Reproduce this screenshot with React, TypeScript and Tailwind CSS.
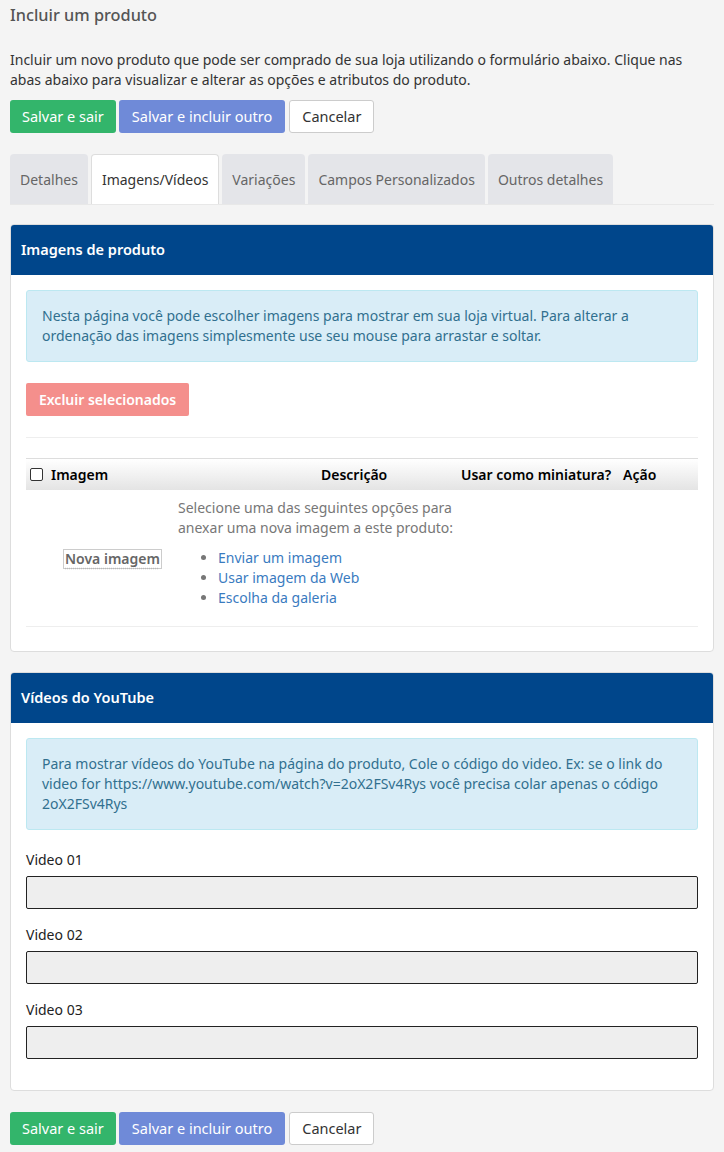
export default function App() {
  const tabs = ["Detalhes", "Imagens/Vídeos", "Variações", "Campos Personalizados", "Outros detalhes"];

  const actions = (
    <div className="flex gap-[3px]">
      <button className="h-[33px] px-[12px] rounded-[3px] bg-[#33b56b] text-white text-[14.5px]">Salvar e sair</button>
      <button className="h-[33px] px-[13px] rounded-[3px] bg-[#6f8ad8] text-white text-[14.5px]">Salvar e incluir outro</button>
      <button className="h-[33px] px-[12px] ml-[1px] rounded-[3px] bg-white border border-[#ccc] text-[#333] text-[14.5px]">Cancelar</button>
    </div>
  );

  return (
    <main className="min-h-screen bg-[#f4f4f4] px-[10px] pt-[3px] pb-[8px] text-[14px] text-[#333] font-['Noto_Sans',sans-serif]">
      {/* TITLE */}
      <h1 className="text-[16.3px] font-medium text-[#555] leading-[24px]">Incluir um produto</h1>
      <p className="mt-[23px] leading-[20px]">
        Incluir um novo produto que pode ser comprado de sua loja utilizando o formulário abaixo. Clique nas abas abaixo para visualizar e alterar as opções e atributos do produto.
      </p>
      <div className="mt-[10px]">{actions}</div>

      {/* TABS */}
      <div className="mt-[21px] flex gap-[3px] border-b border-[#e8e8e8]">
        {tabs.map((t) => (
          <div
            key={t}
            className={`h-[50px] px-[10px] flex items-center rounded-t-[4px] ${
              t === "Imagens/Vídeos" ? "bg-white text-[#333] border border-b-0 border-[#ddd]" : "bg-[#e4e5e9] text-[#666]"
            }`}
          >
            {t}
          </div>
        ))}
      </div>

      {/* IMAGENS */}
      <section className="mt-[19px] bg-white border border-[#ddd] rounded-[4px] overflow-hidden">
        <div className="h-[50px] bg-[#00468b] text-white font-semibold text-[14.5px] flex items-center px-[10px]">
          Imagens de produto
        </div>
        <div className="p-[15px]">
          <div className="bg-[#d9edf7] border border-[#bce8f1] text-[#31708f] rounded-[3px] px-[15px] py-[15px] leading-[20px]">
            Nesta página você pode escolher imagens para mostrar em sua loja virtual. Para alterar a ordenação das imagens simplesmente use seu mouse para arrastar e soltar.
          </div>
          <button className="mt-[21px] h-[33px] px-[13px] rounded-[2px] bg-[#f48f8c] text-white font-semibold text-[14px]">
            Excluir selecionados
          </button>
          <div className="mt-[21px] border-t border-[#eee]" />

          <div className="mt-[20px] h-[32px] flex items-center border-t border-[#ddd] bg-gradient-to-b from-white to-[#e4e4e4] font-semibold text-black">
            <span className="w-[13px] h-[13px] ml-[4px] border border-[#333] rounded-[2px] bg-white" />
            <span className="ml-[8px] w-[270px]">Imagem</span>
            <span className="w-[140px]">Descrição</span>
            <span className="w-[162px]">Usar como miniatura?</span>
            <span>Ação</span>
          </div>

          <div className="grid grid-cols-[152px_1fr] pt-[8px] pb-[18px] border-b border-[#eee]">
            <div />
            <p className="text-[#777] leading-[20px] w-[290px]">
              Selecione uma das seguintes opções para anexar uma nova imagem a este produto:
            </p>
            <div className="pt-[10px] pl-[37px]">
              <span className="inline-block border border-[#ccc] text-[#666] font-semibold leading-[18px] px-[1px] underline decoration-dotted decoration-[#bbb] underline-offset-[4px]">
                Nova imagem
              </span>
            </div>
            <ul className="pt-[10px] pl-[40px] list-disc marker:text-[#777] text-[#3a7bbf] leading-[20px]">
              <li>Enviar um imagem</li>
              <li>Usar imagem da Web</li>
              <li>Escolha da galeria</li>
            </ul>
          </div>
          <div className="h-[9px]" />
        </div>
      </section>

      {/* VIDEOS */}
      <section className="mt-[20px] bg-white border border-[#ddd] rounded-[4px] overflow-hidden">
        <div className="h-[50px] bg-[#00468b] text-white font-semibold text-[14.5px] flex items-center px-[10px]">
          Vídeos do YouTube
        </div>
        <div className="p-[15px]">
          <div className="bg-[#d9edf7] border border-[#bce8f1] text-[#31708f] rounded-[3px] px-[15px] py-[15px] leading-[20px]">
            Para mostrar vídeos do YouTube na página do produto, Cole o código do video. Ex: se o link do video for https://www.youtube.com/watch?v=2oX2FSv4Rys você precisa colar apenas o código 2oX2FSv4Rys
          </div>
          {["Video 01", "Video 02", "Video 03"].map((v, i) => (
            <div key={v} className={i === 0 ? "mt-[20px]" : "mt-[16px]"}>
              <label className="block leading-[20px] text-[#222]">{v}</label>
              <input className="mt-[6px] block w-full h-[33px] bg-[#eee] border border-[#222] rounded-[2px]" />
            </div>
          ))}
          <div className="h-[16px]" />
        </div>
      </section>

      <div className="mt-[21px]">{actions}</div>
    </main>
  );
}
